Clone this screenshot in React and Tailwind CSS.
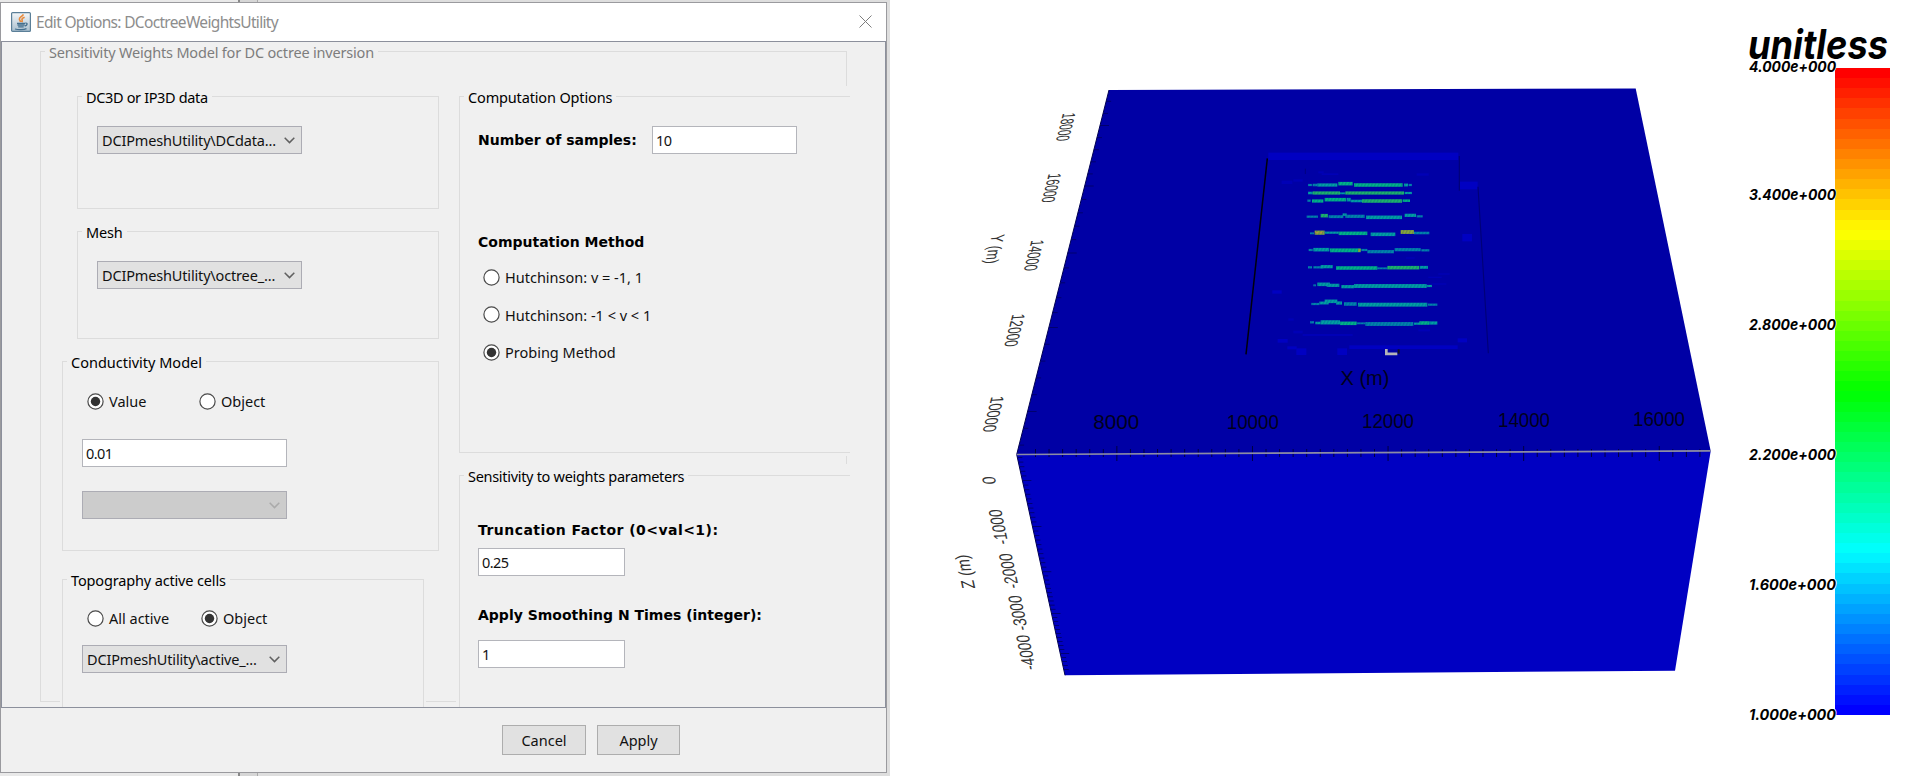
import React from "react";

function Group({ title, className = "", legendClass = "text-black tracking-[-0.15px]", children }) {
  return (
    <fieldset className={`border border-[#dcdcdc] min-w-0 ${className}`}>
      <legend className={`ml-[4px] h-[18px] px-1 leading-[21px] whitespace-nowrap ${legendClass}`}>{title}</legend>
      {children}
    </fieldset>
  );
}

function Combo({ text, disabled, className = "" }) {
  return (
    <div className={`flex h-7 w-[205px] items-center justify-between border border-[#acacb4] pl-1 pr-[6px] ${disabled ? "bg-[#cccccc]" : "bg-[#e1e1e1]"} ${className}`}>
      <span className="whitespace-nowrap tracking-[-0.16px]">{text}</span>
      <svg width="11" height="7" viewBox="0 0 11 7" fill="none" stroke={disabled ? "#aaaaaa" : "#606060"} strokeWidth="1.5">
        <path d="M0.7 0.8 L5.5 5.6 L10.3 0.8" />
      </svg>
    </div>
  );
}

function Field({ value, className = "" }) {
  return (
    <div className={`flex h-7 items-center border border-[#b4b5bb] bg-white pl-[3px] tracking-[-0.6px] ${className}`}>{value}</div>
  );
}

function Radio({ label, checked, className = "" }) {
  return (
    <div className={`flex h-[18px] items-center gap-[5px] whitespace-nowrap ${className}`}>
      <svg width="17" height="17" viewBox="0 0 17 17">
        <circle cx="8.5" cy="8.5" r="7.6" fill="#fff" stroke="#4a4a4a" strokeWidth="1.2" />
        {checked && <circle cx="8.5" cy="8.5" r="4.7" fill="#333" />}
      </svg>
      <span>{label}</span>
    </div>
  );
}

function Heading({ children, className = "" }) {
  return (
    <div className={`font-['DejaVu_Sans'] text-[14px] leading-6 font-bold whitespace-nowrap text-black ${className}`}>{children}</div>
  );
}

function JavaIcon() {
  return (
    <svg width="20" height="20" viewBox="0 0 20 20">
      <defs>
        <linearGradient id="jbg" x1="0" y1="0" x2="0" y2="1">
          <stop offset="0" stopColor="#f4f7f9" />
          <stop offset="1" stopColor="#a9bfce" />
        </linearGradient>
      </defs>
      <rect x="0.6" y="0.6" width="18.8" height="18.8" rx="1" fill="url(#jbg)" stroke="#5b7f98" strokeWidth="1.2" />
      <path d="M12.4 2.4c-1 2.2-4.6 3-4 5 .3 1 1 1.4 1.2 2.6M13.6 5.3c-2 .8-3 1.5-2.6 2.6.4.8.5 1.4-.3 2.2" fill="none" stroke="#e8893a" strokeWidth="1.6" />
      <path d="M6 11.5h8M6.5 13.2h7M7.2 14.9h5.5M14.3 11.2c2.4-.6 2.6 2-.6 3M4 17c3 1 9 1 11.5-.3" fill="none" stroke="#44708f" strokeWidth="1.3" />
    </svg>
  );
}

function Dialog() {
  return (
    <div className="flex h-[771px] w-[887px] flex-col border border-[#9a9a9e] bg-[#f0f0f0]">
      <div className="flex h-[38px] shrink-0 items-center bg-white pl-[10px] pr-[14px] pb-px">
        <JavaIcon />
        <span className="ml-[5px] grow text-[15.5px] tracking-[-0.67px] text-[#8d8d8d]">Edit Options: DCoctreeWeightsUtility</span>
        <svg width="13" height="13" viewBox="0 0 13 13" stroke="#7d7d7d" strokeWidth="1">
          <path d="M0.5 0.5L12.5 12.5M12.5 0.5L0.5 12.5" />
        </svg>
      </div>
      <div className="h-[667px] shrink-0 overflow-hidden border border-[#8c909c] pl-[38px]">
        <Group title="Sensitivity Weights Model for DC octree inversion" className="h-[660px] w-[807px]" legendClass="text-[#7d7d7d] tracking-[-0.19px]">
          <div className="flex">
            <div className="mt-[27px] flex w-[415px] shrink-0 flex-col pl-[21px]">
              <Group title="DC3D or IP3D data" className="ml-[15px] h-[122px] w-[362px]" legendClass="text-black tracking-[-0.35px]">
                <Combo text="DCIPmeshUtility\DCdata..." className="ml-[19px] mt-[21px]" />
              </Group>
              <Group title="Mesh" className="ml-[15px] mt-[13px] h-[117px] w-[362px]">
                <Combo text="DCIPmeshUtility\octree_..." className="ml-[19px] mt-[21px]" />
              </Group>
              <Group title="Conductivity Model" className="mt-[13px] h-[199px] w-[377px]" legendClass="text-black">
                <div className="mt-[22px] flex pl-6">
                  <Radio label="Value" checked className="w-[112px]" />
                  <Radio label="Object" />
                </div>
                <Field value="0.01" className="ml-[19px] mt-[29px] w-[205px]" />
                <Combo text="" disabled className="ml-[19px] mt-[24px]" />
              </Group>
              <div className="-ml-[2px] mt-[19px] w-[366px] bg-[#f0f0f0] pl-[2px]">
                <Group title="Topography active cells" className="h-[180px] w-[362px]">
                  <div className="mt-[21px] flex pl-6">
                    <Radio label="All active" className="w-[114px]" />
                    <Radio label="Object" checked />
                  </div>
                  <Combo text="DCIPmeshUtility\active_..." className="ml-[19px] mt-[18px]" />
                </Group>
              </div>
            </div>
            <div className="mt-[26px] flex w-[394px] shrink-0 flex-col">
              <div className="h-[370px] bg-[#f0f0f0] pl-[3px] pt-px">
                <Group title="Computation Options" className="h-[366px] border-r-0">
                  <div className="mt-[21px] flex items-center pl-[18px]">
                    <Heading className="w-[174px]">Number of samples:</Heading>
                    <Field value="10" className="w-[145px]" />
                  </div>
                  <Heading className="mt-[76px] pl-[18px]">Computation Method</Heading>
                  <div className="mt-[14px] flex flex-col gap-[19.5px] pl-[23px]">
                    <Radio label="Hutchinson: v = -1, 1" />
                    <Radio label="Hutchinson: -1 < v < 1" />
                    <Radio label="Probing Method" checked />
                  </div>
                </Group>
              </div>
              <div className="mt-2 bg-[#f0f0f0] pl-[3px] pt-[2px]">
                <Group title="Sensitivity to weights parameters" className="h-[260px] border-r-0" legendClass="text-black tracking-[-0.3px]">
                  <Heading className="mt-[34px] pl-[18px] tracking-[0.45px]">{"Truncation Factor (0<val<1):"}</Heading>
                  <Field value="0.25" className="ml-[18px] mt-[6px] w-[147px]" />
                  <Heading className="mt-[27px] pl-[18px]">Apply Smoothing N Times (integer):</Heading>
                  <Field value="1" className="ml-[18px] mt-[13px] w-[147px]" />
                </Group>
              </div>
            </div>
          </div>
        </Group>
      </div>
      <div className="flex gap-[11px] pl-[501px] pt-[17px]">
        <button className="h-[30px] w-[84px] border border-[#adadad] bg-[#e1e1e1]">Cancel</button>
        <button className="h-[30px] w-[83px] border border-[#adadad] bg-[#e1e1e1]">Apply</button>
      </div>
    </div>
  );
}

const xLabels = [["8000", 1116.3, 429, 46], ["10000", 1252.8, 428.5, 52], ["12000", 1388, 427.7, 52], ["14000", 1524, 427, 52], ["16000", 1659, 426, 52], ["X (m)", 1365, 385, 49]];
const yLabels = [["18000", 1066, 127, 29], ["16000", 1051.5, 188, 30], ["14000", 1034, 255.3, 32], ["12000", 1014.8, 330.3, 34], ["10000", 993.5, 414, 37], ["Y (m)", 994.8, 249, 30]];
const zLabels = [["0", 989, 480.3, 8], ["-1000", 998.3, 527, 36], ["-2000", 1008.7, 571, 36], ["-3000", 1017.8, 613, 36], ["-4000", 1025.8, 652.5, 36], ["Z (m)", 965, 571.7, 35]];

/* Survey lines: [x1, x2, y, thickness, colour] in thirds of a pixel. */
const T = "#00a0a0", G = "#00b484", D = "#0084a8", L = "#1cb468", Y = "#86a838";
const survey = [
  [234, 246, 165, 5, D], [248, 262, 165, 6, D], [262, 322, 165, 8, T], [325, 368, 161, 9, G], [372, 518, 165, 9, G], [522, 534, 165, 7, T], [536, 546, 165, 5, D],
  [234, 248, 189, 6, T], [248, 330, 189, 8, L], [330, 346, 190, 4, T], [346, 522, 189, 8, L], [524, 546, 189, 5, T],
  [232, 242, 212, 5, D], [246, 280, 213, 8, G], [284, 348, 209, 9, G], [350, 362, 209, 9, T], [362, 396, 213, 6, T], [396, 516, 213, 9, L], [518, 540, 212, 6, G],
  [230, 264, 260, 5, D], [272, 294, 257, 9, L], [296, 340, 260, 7, D], [338, 350, 254, 6, T], [346, 404, 259, 8, D], [408, 516, 262, 9, T], [524, 558, 256, 8, T], [560, 578, 259, 5, D],
  [240, 252, 310, 4, D], [254, 284, 308, 11, Y], [284, 326, 308, 5, T], [326, 412, 310, 9, G], [422, 496, 313, 9, T], [512, 552, 306, 10, Y], [552, 598, 309, 6, D],
  [236, 248, 360, 5, D], [250, 298, 359, 9, T], [300, 392, 361, 10, G], [384, 392, 361, 8, Y], [394, 412, 360, 5, D], [412, 492, 365, 8, D], [494, 572, 359, 8, D], [574, 598, 361, 5, D],
  [234, 246, 412, 5, D], [250, 280, 412, 5, D], [272, 308, 410, 8, T], [318, 442, 414, 9, G], [442, 472, 415, 4, D], [472, 568, 413, 9, L], [570, 594, 412, 7, T],
  [250, 258, 466, 4, D], [262, 300, 463, 9, T], [290, 328, 466, 8, T], [334, 372, 470, 8, T], [372, 590, 468, 10, T], [590, 606, 468, 5, T],
  [244, 268, 522, 5, D], [268, 296, 519, 7, T], [284, 322, 514, 9, T], [318, 336, 519, 8, T], [342, 380, 522, 9, D], [384, 592, 524, 10, T], [594, 622, 524, 5, D],
  [240, 252, 577, 5, D], [256, 272, 579, 6, T], [272, 330, 577, 11, T], [330, 380, 580, 9, G], [380, 406, 580, 4, D], [406, 550, 582, 10, D], [552, 570, 581, 5, T], [568, 598, 579, 9, G], [598, 622, 579, 8, T],
];
const patches = [[115, 68, 570, 22], [690, 155, 53, 23], [697, 312, 29, 22], [127, 481, 28, 10], [683, 625, 28, 12], [358, 646, 325, 11], [322, 655, 29, 20], [199, 655, 30, 20], [172, 649, 28, 9], [143, 627, 30, 11]];
const faint = [[218, 612, 150, 6], [155, 152, 32, 10], [190, 148, 28, 7], [190, 602, 28, 8], [560, 130, 36, 7], [175, 565, 16, 7], [265, 124, 16, 6], [275, 130, 50, 5], [565, 598, 35, 6], [605, 460, 44, 4], [595, 440, 40, 4], [625, 430, 34, 4], [528, 382, 26, 4]];

function edgeTicks(p, q, majors, divisions) {
  const at = (y) => p[0] + ((y - p[1]) * (q[0] - p[0])) / (q[1] - p[1]);
  const out = [];
  for (let i = -1; i < majors.length; i++) {
    const step = i < 0 ? majors[1] - majors[0] : i < majors.length - 1 ? majors[i + 1] - majors[i] : majors[i] - majors[i - 1];
    const y0 = i < 0 ? majors[0] - step : majors[i];
    for (let k = 0; k < divisions; k++) {
      const y = y0 + (step * k) / divisions;
      if (y > p[1] + 2 && y < q[1] - 2) out.push([at(y), y, k === 0 ? 9 : 5]);
    }
  }
  return out;
}

function Scene() {
  const xt = Array.from({ length: 50 }, (_, i) => ({ x: 1035.5 + i * 13.56, major: i % 10 === 6 })).filter((t) => t.x < 1706);
  const yt = edgeTicks([1109, 90], [1016.7, 454.5], [125.5, 186, 253, 327.5, 411.5], 5);
  const zt = edgeTicks([1016.7, 454.5], [1065, 675.3], [480.5, 526.5, 571.7, 613.5, 653.5], 10);
  return (
    <svg className="block h-[780px] w-[1019px] shrink-0" viewBox="890 0 1019 780" fontFamily="'Liberation Sans', Arial, sans-serif">
      <defs>
        <pattern id="weave" width="10" height="20" patternUnits="userSpaceOnUse" patternTransform="skewX(-25)">
          <rect x="0" y="0" width="4" height="20" fill="#0000a5" opacity="0.2" />
        </pattern>
      </defs>
      <polygon points="1109,90 1635.7,88.5 1710.7,451 1016.7,454.5" fill="#0000a5" />
      <polygon points="1016.7,454.5 1710.7,451 1675,670.7 1065,675.3" fill="#0000c2" />
      <path d="M1109 90L1016.7 454.5L1065 675.3" fill="none" stroke="#000050" strokeWidth="1" />
      {yt.map(([x, y, l], i) => <path key={i} d={`M${x} ${y}h${l}`} stroke="#000060" strokeWidth="0.8" />)}
      {zt.map(([x, y, l], i) => <path key={i} d={`M${x} ${y}h${l}`} stroke="#000060" strokeWidth="0.8" />)}
      {xt.map((t, i) => <path key={i} d={`M${t.x} ${t.major ? 446 : 449}V${t.major ? 461 : 457}`} stroke="#000040" strokeWidth="1" />)}
      <path d="M1016.7 454.5L1710.7 450.8" stroke="#8c8ca4" strokeWidth="1.7" />
      <g transform="translate(1230 130) scale(0.33333)">
        {patches.map(([x, y, w, h], i) => <rect key={i} x={x} y={y} width={w} height={h} fill="#0000c2" />)}
        {faint.map(([x, y, w, h], i) => <rect key={i} x={x} y={y} width={w} height={h} fill="#0000b6" />)}
        <path d="M112 85L48 673" stroke="#00000c" strokeWidth="4.5" />
        <path d="M688 78V182M744 170L775 670" stroke="#000078" strokeWidth="3.5" fill="none" />
        <path d="M226 116V132" stroke="#000080" strokeWidth="3" />
        {survey.map(([a, b, y, h, c], i) => (
          <g key={i}>
            <rect x={a} y={y - h / 2 - 0.8} width={b - a} height={h + 1.6} fill={c} />
            <rect x={a} y={y - h / 2 - 0.8} width={b - a} height={h + 1.6} fill="url(#weave)" />
          </g>
        ))}
        <path d="M257 308H282" stroke="#c08a40" strokeWidth="3" strokeDasharray="7 5" />
        <path d="M469 657V671.5H502" fill="none" stroke="#b4b4b8" strokeWidth="8" />
        <path d="M506 658V671" stroke="#101020" strokeWidth="6" />
      </g>
      {xLabels.map(([t, x, y, w]) => (
        <text key={t} x={x} y={y} fontSize="19.5" textAnchor="middle" textLength={w} lengthAdjust="spacingAndGlyphs" fill="#00001c">{t}</text>
      ))}
      {yLabels.map(([t, x, y, w]) => (
        <text key={t} transform={`matrix(-0.245 0.970 -1 0.060 ${x} ${y})`} x="0" y="6.5" fontSize="18.5" textAnchor="middle" textLength={w} lengthAdjust="spacingAndGlyphs" fill="#333">{t}</text>
      ))}
      {zLabels.map(([t, x, y, w]) => (
        <text key={t} transform={`matrix(-0.210 -0.975 1 -0.040 ${x} ${y})`} x="0" y="6.5" fontSize="18.5" textAnchor="middle" textLength={w} lengthAdjust="spacingAndGlyphs" fill="#333">{t}</text>
      ))}
      {Array.from({ length: 64 }, (_, i) => (
        <rect key={i} x="1835" y={68 + i * 10.109} width="55" height="10.3" fill={`hsl(${(i * 240) / 63} 100% 50%)`} shapeRendering="crispEdges" />
      ))}
      <g fontFamily="Inter, 'Liberation Sans', sans-serif" fontStyle="italic" fontWeight="700">
        <text x="1748" y="59" fontSize="40.5" textLength="140" lengthAdjust="spacingAndGlyphs">unitless</text>
        {[["4.000e+000", 71.5], ["3.400e+000", 200.2], ["2.800e+000", 330.2], ["2.200e+000", 460.2], ["1.600e+000", 590.2], ["1.000e+000", 720.2]].map(([t, y]) => (
          <text key={t} x="1749" y={y} fontSize="14.8" textLength="87" lengthAdjust="spacingAndGlyphs" stroke="#fff" strokeWidth="1.5" paintOrder="stroke">{t}</text>
        ))}
      </g>
    </svg>
  );
}

export default function App() {
  return (
    <div className="flex h-[780px] w-[1909px] overflow-hidden bg-white font-['Noto_Sans','Open_Sans',sans-serif] text-[14.5px] leading-5 text-[#111]">
      <div className="h-[776px] w-[890px] shrink-0 bg-[linear-gradient(90deg,#e9e9e9_238px,#888_238px,#888_240px,#d6d6d6_240px,#d6d6d6_257px,#aaa_257px,#aaa_258px,#dedede_258px)] pt-[2px]">
        <Dialog />
      </div>
      <Scene />
    </div>
  );
}
